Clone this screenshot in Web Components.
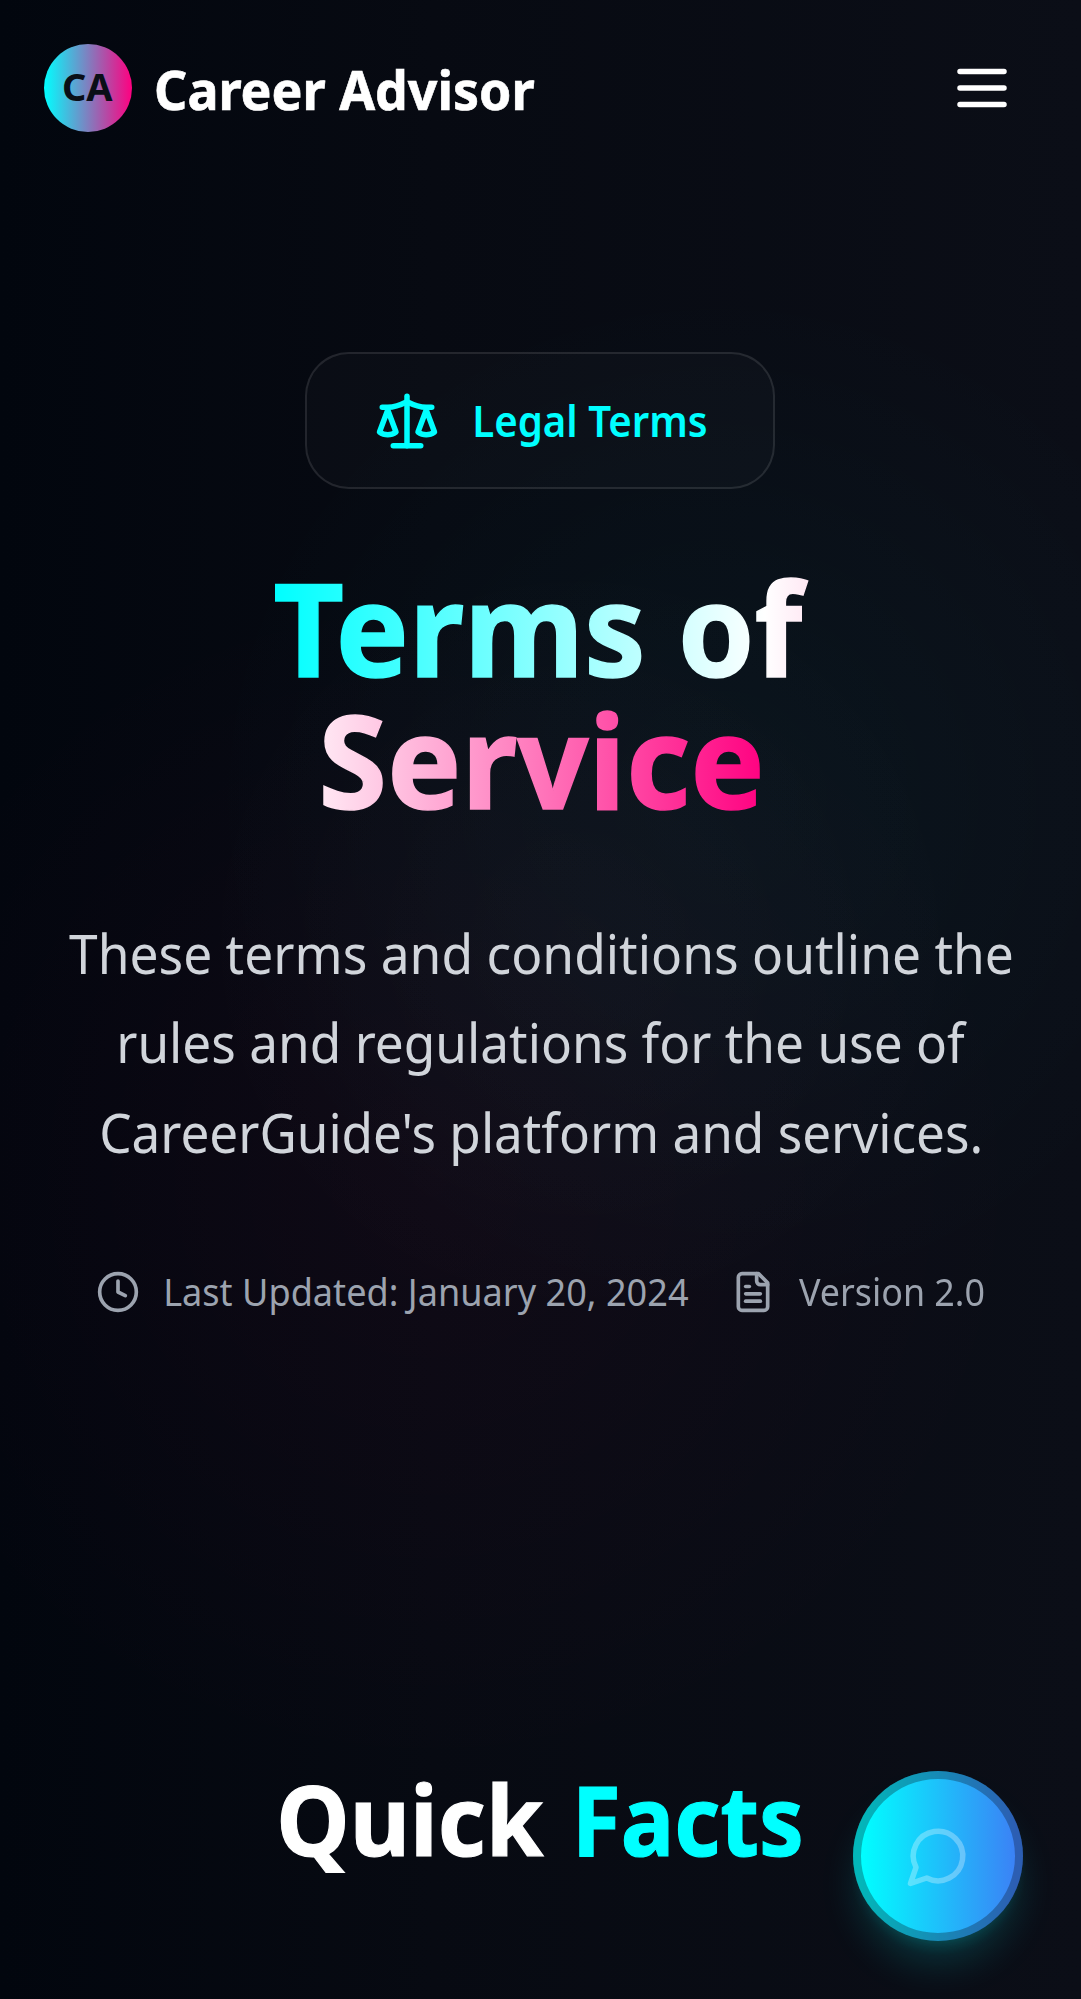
<!DOCTYPE html>
<html lang="en">
<head>
<meta charset="utf-8">
<title>Career Advisor - Terms of Service</title>
<style>
  html, body { margin: 0; padding: 0; background: #060911; }
  body { font-family: "Segoe UI", "Noto Sans", "Open Sans", sans-serif; color: #fff; height: 1999px; overflow: hidden; }
</style>
</head>
<body>
<terms-page></terms-page>
<script>
const define = (name, html, setup) => customElements.define(name, class extends HTMLElement {
  constructor() {
    super();
    const t = document.createElement('template');
    t.innerHTML = html;
    this.attachShadow({ mode: 'open' }).appendChild(t.content.cloneNode(true));
  }
  connectedCallback() { if (setup) setup(this, this.shadowRoot); }
});

/* A single line whose visible ink spans exactly the given width. */
const pen = document.createElement('canvas').getContext('2d');
define('fit-line', `
  <style>
    :host { display: block; flex: none; white-space: nowrap; }
    span { display: inline-block; transform-origin: 0 50%; vertical-align: top; }
    :host([heavy]) span { -webkit-text-stroke: .012em currentColor; }
    :host([tone="title"]) span {
      -webkit-text-stroke: .012em transparent;
      padding-right: .12em;
      color: transparent;
      background: linear-gradient(90deg, #00ffff 0%, #ffffff 50%, #ff0080 100%) no-repeat;
      background-size: var(--sweep) 100%;
      background-position: var(--start) 0;
      -webkit-background-clip: text; background-clip: text;
    }
  </style><span></span>`, (el, root) => {
  const span = root.querySelector('span');
  const text = el.getAttribute('text');
  const width = parseFloat(el.getAttribute('ink'));
  span.textContent = text;
  const cs = getComputedStyle(el);
  pen.font = `${cs.fontWeight} ${cs.fontSize} ${cs.fontFamily}`;
  const m = pen.measureText(text);
  const left = -m.actualBoundingBoxLeft;
  const k = width / (m.actualBoundingBoxRight - left);
  el.style.width = width + 'px';
  if (el.hasAttribute('start')) {
    span.style.setProperty('--sweep', 980 / k + 'px');
    span.style.setProperty('--start', (left - parseFloat(el.getAttribute('start')) / k) + 'px');
  }
  span.style.transform = `scaleX(${k}) translateX(${-left}px)`;
});

const ICONS = {
  menu: '<path d="M4 12h16M4 6h16M4 18h16"/>',
  scale: '<path d="m16 16 3-8 3 8c-.87.65-1.92 1-3 1s-2.13-.35-3-1Z"/><path d="m2 16 3-8 3 8c-.87.65-1.92 1-3 1s-2.13-.35-3-1Z"/><path d="M7 21h10"/><path d="M12 3v18"/><path d="M3 7h2c2 0 5-1 7-2 2 1 5 2 7 2h2"/>',
  clock: '<circle cx="12" cy="12" r="10"/><path d="M12 6v6l4 2"/>',
  file: '<path d="M15 2H6a2 2 0 0 0-2 2v16a2 2 0 0 0 2 2h12a2 2 0 0 0 2-2V7Z"/><path d="M14 2v4a2 2 0 0 0 2 2h4"/><path d="M10 9H8"/><path d="M16 13H8"/><path d="M16 17H8"/>',
  chat: '<path d="M7.9 20A9 9 0 1 0 4 16.1L2 22Z"/>'
};
define('line-icon', `
  <style>
    :host { display: block; flex: none; }
    svg { display: block; width: 100%; height: 100%; fill: none; stroke: currentColor; stroke-width: 2; stroke-linecap: round; stroke-linejoin: round; }
  </style><svg viewBox="0 0 24 24"></svg>`, (el, root) => {
  root.querySelector('svg').innerHTML = ICONS[el.getAttribute('name')];
  const s = el.getAttribute('size') + 'px';
  el.style.width = s; el.style.height = s;
});

define('site-header', `
  <style>
    :host { display: flex; align-items: center; justify-content: space-between; height: 176px; padding: 0 66px 0 44px; box-sizing: border-box; }
    .brand { display: flex; align-items: center; }
    .logo { width: 88px; height: 88px; border-radius: 50%; background: linear-gradient(90deg, #00ffff, #ff0080); display: flex; align-items: center; justify-content: center; color: #0a0e17; font-size: 37.7px; line-height: 54px; font-weight: 700; padding: 0 0 2px 2px; box-sizing: border-box; }
    .name { font-size: 54px; line-height: 76px; font-weight: 700; margin: 2px 0 0 23.5px; }
  </style>
  <div class="brand">
    <div class="logo"><fit-line text="CA" ink="49.5"></fit-line></div>
    <div class="name"><fit-line heavy text="Career Advisor" ink="378.5"></fit-line></div>
  </div>
  <line-icon name="menu" size="66"></line-icon>`);

define('legal-badge', `
  <style>
    :host { display: flex; align-items: center; width: 470px; height: 137px; box-sizing: border-box; border: 2.75px solid rgba(255,255,255,.1); border-radius: 44px; background: rgba(255,255,255,.02); color: #00ffff; padding-left: 67px; gap: 35px; font-size: 43px; line-height: 66px; font-weight: 600; margin-right: 1px; }
  </style>
  <line-icon name="scale" size="66"></line-icon>
  <fit-line text="Legal Terms" ink="231.5"></fit-line>`);

define('terms-hero', `
  <style>
    :host { display: flex; flex-direction: column; align-items: center; padding-top: 176px; }
    h1 { margin: 72px 0 0; font-size: 129px; line-height: 132px; font-weight: 700; display: flex; flex-direction: column; align-items: center; }
    p { margin: 84px 0 0; font-size: 54px; line-height: 89.375px; color: #d1d5db; display: flex; flex-direction: column; align-items: center; }
    .meta { margin: 87px 0 0; height: 55px; display: flex; align-items: center; font-size: 37.7px; line-height: 55px; color: #9ca3af; padding-right: 2px; }
    .meta div { display: flex; align-items: center; }
    .updated { gap: 25.5px; margin-right: 43.5px; }
    .version { gap: 23.5px; }
  </style>
  <legal-badge></legal-badge>
  <h1>
    <fit-line tone="title" text="Terms of" ink="533" start="0" style="margin-left:2px"></fit-line>
    <fit-line tone="title" text="Service" ink="437" start="537" style="margin-left:2px"></fit-line>
  </h1>
  <p>
    <fit-line text="These terms and conditions outline the" ink="942.5" style="margin-right:1px"></fit-line>
    <fit-line text="rules and regulations for the use of" ink="847" style="margin-left:5px"></fit-line>
    <fit-line text="CareerGuide's platform and services." ink="878"></fit-line>
  </p>
  <div class="meta">
    <div class="updated"><line-icon name="clock" size="44"></line-icon><fit-line text="Last Updated: January 20, 2024" ink="522"></fit-line></div>
    <div class="version"><line-icon name="file" size="44"></line-icon><fit-line text="Version 2.0" ink="184.5"></fit-line></div>
  </div>`);

define('quick-facts', `
  <style>
    :host { display: block; margin-top: 444px; }
    h2 { margin: 0; display: flex; justify-content: center; gap: 35px; font-size: 97px; line-height: 110px; font-weight: 700; padding-left: 1px; }
    .accent { color: #00ffff; }
  </style>
  <h2><fit-line heavy text="Quick" ink="263"></fit-line><fit-line heavy class="accent" text="Facts" ink="221.5"></fit-line></h2>`);

define('chat-button', `
  <style>
    :host { position: fixed; left: 853px; top: 1771px; width: 170px; height: 170px; border-radius: 50%; display: flex; align-items: center; justify-content: center;
      background: linear-gradient(90deg, #00ffff 8px, #3b82f6 162px);
      box-shadow: inset 0 0 0 8px rgba(10,14,23,.3), 0 27.5px 41px -8px rgba(0,255,255,.18), 0 11px 16.5px -11px rgba(0,255,255,.22); }
    line-icon { color: rgba(255,255,255,.3); }
  </style>
  <line-icon name="chat" size="66"></line-icon>`);

define('terms-page', `
  <style>
    :host { display: block; height: 1999px; overflow: hidden;
      background:
        radial-gradient(circle at 720px 800px, rgba(0,255,255,.03), rgba(0,255,255,.022) 190px, rgba(0,255,255,0) 520px),
        radial-gradient(circle at 430px 1180px, rgba(255,0,128,.034), rgba(255,0,128,.024) 230px, rgba(255,0,128,0) 600px),
        radial-gradient(circle at 580px 940px, rgba(255,255,255,.02), rgba(255,255,255,0) 400px),
        linear-gradient(90deg, #02060e 0%, #070a12 40%, #0b0e17 100%); }
  </style>
  <site-header></site-header>
  <terms-hero></terms-hero>
  <quick-facts></quick-facts>
  <chat-button></chat-button>`);
</script>
</body>
</html>
